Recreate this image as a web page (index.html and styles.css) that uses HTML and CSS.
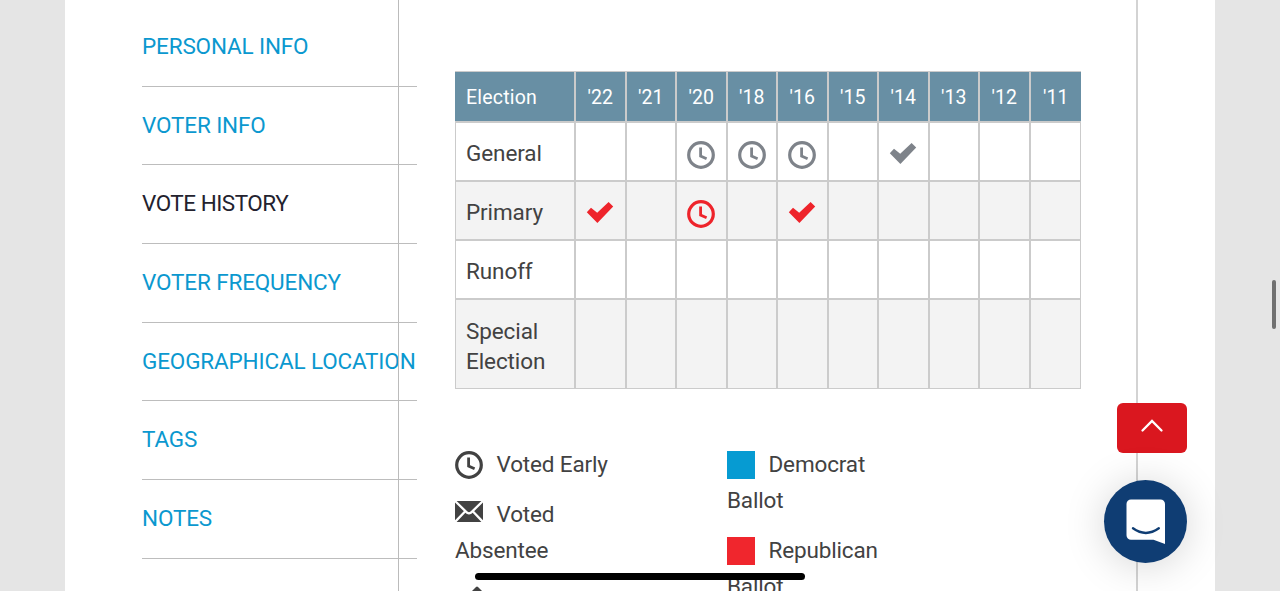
FILE: index.html
```
<!DOCTYPE html>
<html lang="en">
<head>
    <meta charset="UTF-8">
    <meta name="viewport" content="width=device-width, initial-scale=1.0">
    <title>Vote History</title>
    <link rel="stylesheet" href="styles.css">
</head>
<body>
    <svg class="symbols">
        <symbol id="clock" viewBox="0 0 28 28">
            <circle cx="14" cy="14" r="12.3" fill="none" stroke="currentColor" stroke-width="3.2"/>
            <path d="M13.6 6.5v8.6l6 2.6" fill="none" stroke="currentColor" stroke-width="2.8"/>
        </symbol>
        <symbol id="check" viewBox="0 0 28 28">
            <path d="M0.8 12.2L5 7.8l6.2 5L22.6 2l4.6 4.4L11.4 23z" fill="currentColor"/>
        </symbol>
        <symbol id="envelope" viewBox="0 0 28 21">
            <path d="M0 0h28v21H0z" fill="currentColor"/>
            <path d="M0 0l12.2 11.8q1.8 1 3.6 0L28 0M0 21l11-11.5M28 21L17 9.5" fill="none" stroke="#fff" stroke-width="2.3"/>
        </symbol>
    </svg>

    <div class="page">
        <ul class="side-nav">
            <li><a href="#">PERSONAL INFO</a></li>
            <li><a href="#">VOTER INFO</a></li>
            <li><a href="#" class="active">VOTE HISTORY</a></li>
            <li><a href="#">VOTER FREQUENCY</a></li>
            <li><a href="#">GEOGRAPHICAL LOCATION</a></li>
            <li><a href="#">TAGS</a></li>
            <li><a href="#">NOTES</a></li>
        </ul>

        <div class="content">
            <table class="history">
                <thead>
                    <tr>
                        <th class="name">Election</th>
                        <th>'22</th><th>'21</th><th>'20</th><th>'18</th><th>'16</th>
                        <th>'15</th><th>'14</th><th>'13</th><th>'12</th><th>'11</th>
                    </tr>
                </thead>
                <tbody>
                    <tr>
                        <td class="name">General</td>
                        <td></td>
                        <td></td>
                        <td><svg class="icon gray"><use href="#clock"/></svg></td>
                        <td><svg class="icon gray"><use href="#clock"/></svg></td>
                        <td><svg class="icon gray"><use href="#clock"/></svg></td>
                        <td></td>
                        <td><svg class="icon gray"><use href="#check"/></svg></td>
                        <td></td>
                        <td></td>
                        <td></td>
                    </tr>
                    <tr class="odd">
                        <td class="name">Primary</td>
                        <td><svg class="icon red"><use href="#check"/></svg></td>
                        <td></td>
                        <td><svg class="icon red"><use href="#clock"/></svg></td>
                        <td></td>
                        <td><svg class="icon red"><use href="#check"/></svg></td>
                        <td></td>
                        <td></td>
                        <td></td>
                        <td></td>
                        <td></td>
                    </tr>
                    <tr>
                        <td class="name">Runoff</td>
                        <td></td><td></td><td></td><td></td><td></td>
                        <td></td><td></td><td></td><td></td><td></td>
                    </tr>
                    <tr class="odd tall">
                        <td class="name">Special Election</td>
                        <td></td><td></td><td></td><td></td><td></td>
                        <td></td><td></td><td></td><td></td><td></td>
                    </tr>
                </tbody>
            </table>

            <div class="legend">
                <ul>
                    <li><svg class="icon"><use href="#clock"/></svg>Voted Early</li>
                    <li><svg class="icon mail"><use href="#envelope"/></svg>Voted Absentee</li>
                    <li class="next"><svg class="peak" viewBox="0 0 12 6"><path d="M0 6l5-5q1-1 2 0l5 5z" fill="currentColor"/></svg></li>
                </ul>
                <ul>
                    <li><span class="swatch democrat"></span>Democrat Ballot</li>
                    <li><span class="swatch republican"></span>Republican Ballot</li>
                </ul>
            </div>
        </div>
    </div>

    <a href="#" class="to-top">
        <svg width="24" height="16" viewBox="0 0 24 16"><path d="M2.5 12.5L12 3l9.5 9.5" fill="none" stroke="#fff" stroke-width="2.3" stroke-linecap="round"/></svg>
    </a>
    <a href="#" class="chat">
        <svg width="40" height="46" viewBox="0 0 40 46">
            <path d="M5 0.5h29.5a4.5 4.5 0 0 1 4.5 4.5v40l-11.5-4.2H5a4.5 4.5 0 0 1-4.5-4.5V5A4.5 4.5 0 0 1 5 0.5z" fill="#fff"/>
            <path d="M7 29.3q12.8 9.2 25.8 0" fill="none" stroke="#0f3d73" stroke-width="2.4" stroke-linecap="round"/>
        </svg>
    </a>
    <div class="scroll-thumb"></div>
    <div class="home-bar"></div>
</body>
</html>
```
FILE: styles.css
```
* {
    box-sizing: border-box;
}

body {
    margin: 0;
    height: 591px;
    overflow: hidden;
    background-color: #e5e5e5;
    color: #424242;
    font-family: Roboto, Arial, sans-serif;
    font-size: 22.5px;
}

ul {
    list-style-type: none;
    margin: 0;
    padding: 0;
}

.symbols {
    display: none;
}

.page {
    display: flex;
    width: 1150px;
    height: 591px;
    margin: 0 auto;
    padding-left: 77px;
    background-color: #fff;
    overflow: hidden;
}

/* the nav is wider than its column and runs over the border */
.side-nav {
    flex: none;
    width: 275px;
    margin-right: -19px;
    padding-top: 8px;
}

.side-nav li {
    height: 78.7px;
    border-bottom: 1px solid #bdbdbd;
    line-height: 77px;
    white-space: nowrap;
}

.side-nav a {
    color: #0b98cf;
    text-decoration: none;
    letter-spacing: -0.15px;
}

.side-nav a.active {
    color: #23222e;
    letter-spacing: -0.5px;
}

.content {
    flex: none;
    width: 740px;
    height: 640px;
    padding: 71px 55px 0 56px;
    border-left: 1px solid #bbb;
    border-right: 2px solid #d3d3d3;
}

.history {
    width: 626px;
    table-layout: fixed;
    border-collapse: separate;
    border-spacing: 0;
}

.history th,
.history td {
    padding: 0;
    border: 0 solid #cbcbcb;
    border-width: 0 2px 2px 0;
    text-align: center;
    vertical-align: middle;
}

.history th {
    height: 52px;
    padding-top: 2px;
    border-top-width: 1px;
    background-color: #688fa4;
    color: #fff;
    font-size: 19.5px;
    font-weight: normal;
}

.history td {
    height: 59px;
}

.history .name {
    width: 121px;
    padding: 3px 10px 0 10px;
    border-left-width: 1px;
    text-align: left;
    line-height: 30px;
    letter-spacing: -0.1px;
}

.history th.name {
    padding-top: 2px;
    padding-left: 11px;
    border-left-width: 0;
    letter-spacing: 0.2px;
}

.history td:last-child {
    border-right-width: 1px;
}

.history th:last-child {
    border-right-width: 0;
}

.history .odd {
    background-color: #f3f3f3;
}

.history .tall td {
    height: 89px;
    border-bottom-width: 1px;
}

.icon {
    width: 28px;
    height: 28px;
}

.history .icon {
    display: block;
    margin: 6px auto 0;
}

.gray {
    color: #7e838a;
}

.red {
    color: #ee242b;
}

.legend {
    display: flex;
    gap: 112px;
    margin-top: 57px;
    line-height: 36px;
    letter-spacing: -0.15px;
}

.legend ul {
    width: 160px;
}

.legend li {
    margin-bottom: 14px;
}

.legend .icon,
.swatch {
    display: inline-block;
    width: 28px;
    height: 28px;
    margin-right: 13.5px;
    vertical-align: -7px;
}

.legend .mail {
    height: 21px;
    vertical-align: 0;
}

.legend .next {
    padding: 4px 0 0 16px;
}

.legend .peak {
    display: block;
    width: 12px;
    height: 6px;
}

.democrat {
    background-color: #069bd2;
}

.republican {
    background-color: #f0262d;
}

.to-top,
.chat {
    position: absolute;
    display: flex;
    justify-content: center;
    align-items: center;
}

.to-top {
    left: 1117px;
    top: 403px;
    width: 70px;
    height: 50px;
    padding-bottom: 4px;
    border-radius: 6px;
    background-color: #da171f;
}

.chat {
    left: 1104px;
    top: 480px;
    width: 83px;
    height: 83px;
    border-radius: 50%;
    background-color: #0f3d73;
    box-shadow: 0 3px 40px rgba(0, 0, 0, 0.17);
}

.scroll-thumb {
    position: absolute;
    left: 1272px;
    top: 280px;
    width: 4px;
    height: 49px;
    border-radius: 2px;
    background-color: #707070;
}

.home-bar {
    position: absolute;
    left: 475px;
    top: 573px;
    width: 330px;
    height: 7px;
    border-radius: 4px;
    background-color: #000;
}
```
